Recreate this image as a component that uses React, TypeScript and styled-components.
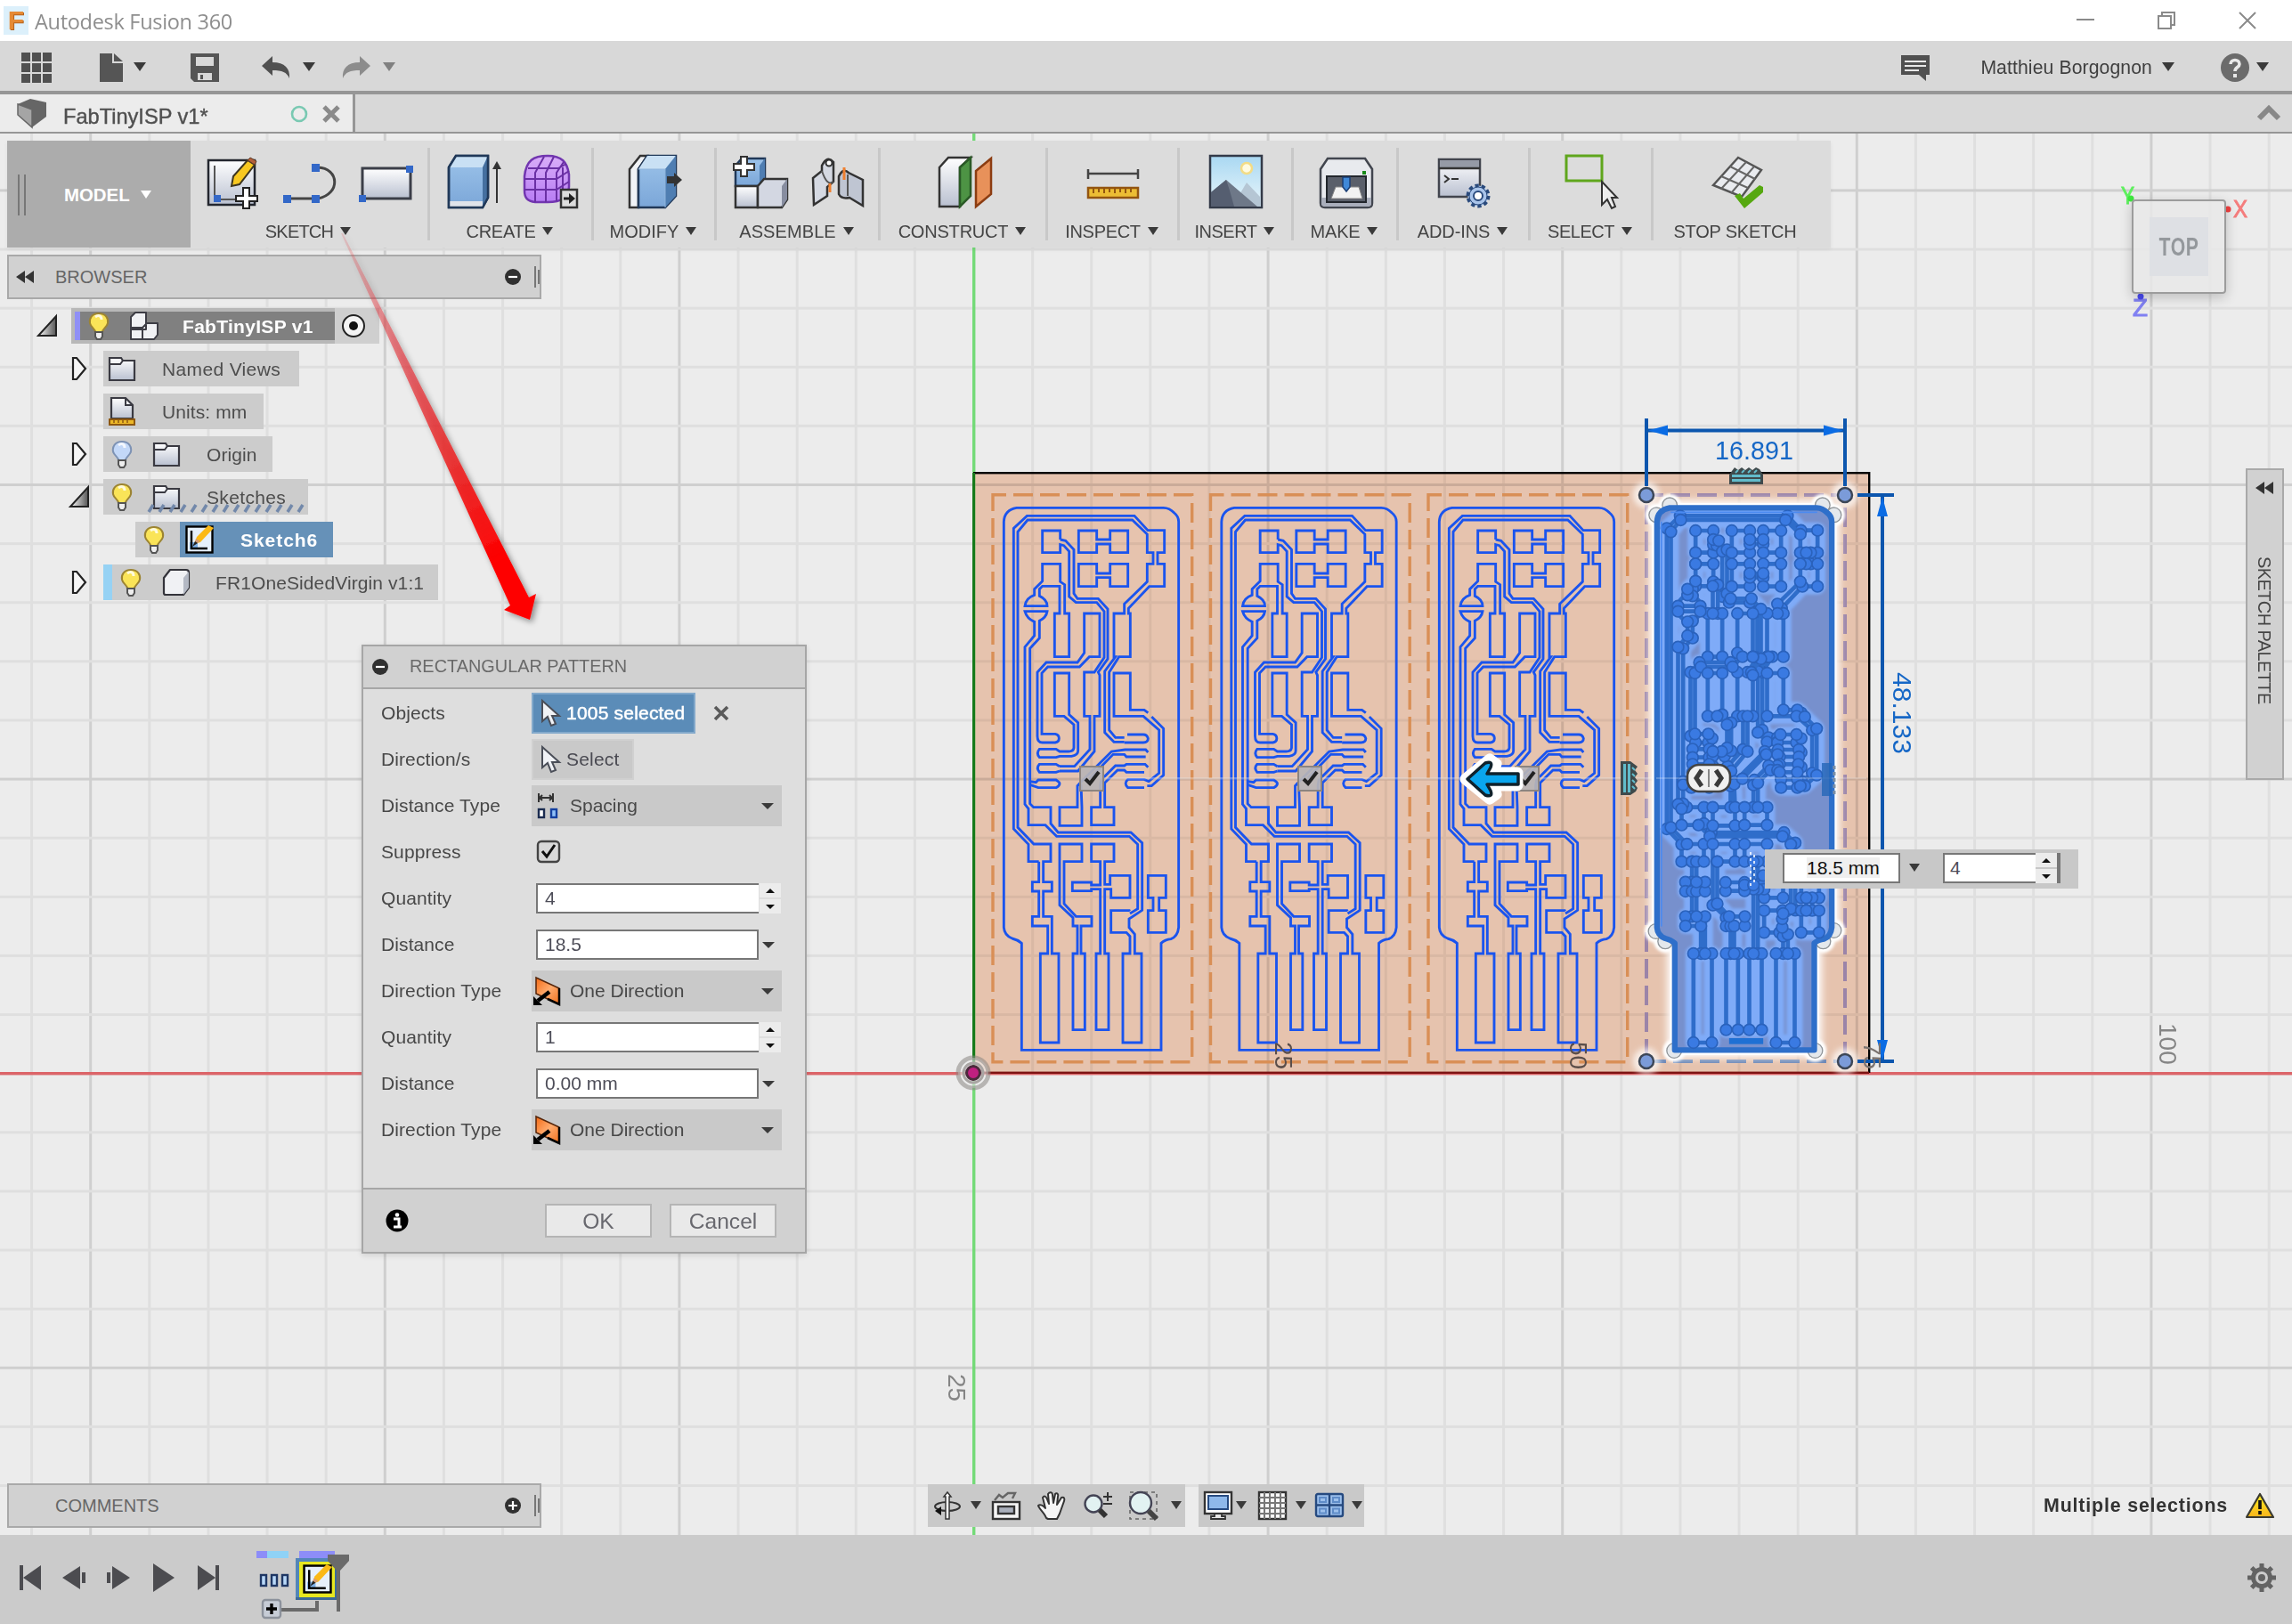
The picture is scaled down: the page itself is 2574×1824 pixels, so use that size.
import React from 'react';
import styled, { createGlobalStyle } from 'styled-components';

const GlobalStyle = createGlobalStyle`
  body { margin: 0; background: #ececec; font-family: "Liberation Sans", Arial, sans-serif; }
  * { box-sizing: border-box; }
  svg { display: block; flex: none; overflow: visible; }
`;

/* ---------- shell ---------- */

const Shell = styled.div`
  width: 2574px;
  height: 1824px;
  display: flex;
  flex-direction: column;
  overflow: hidden;
  color: #444;
`;

const TitleBar = styled.header`
  height: 46px;
  background: #fff;
  display: flex;
  align-items: center;
  padding: 0 40px 0 4px;
`;

const Logo = styled.div`
  width: 28px;
  height: 32px;
  background: #dcf0fb;
  color: #e58a33;
  font: bold 30px/32px "Liberation Sans", sans-serif;
  text-align: center;
  text-shadow: 1px 1px 0 #b4621c;
`;

const AppName = styled.span`
  margin: 2px 0 0 7px;
  font: 23.5px "Open Sans", "Noto Sans", sans-serif;
  letter-spacing: -0.3px;
  color: #8e8e8e;
`;

const WindowButtons = styled.div`
  margin-left: auto;
  display: flex;
  gap: 71px;
`;

const QuickBar = styled.div`
  height: 60px;
  background: #d8d8d8;
  border-bottom: 4px solid #969696;
  display: flex;
  align-items: center;
  padding: 4px 26px 0 24px;
`;

const Space = styled.i<{ $w: number }>`
  width: ${p => p.$w}px;
  flex: none;
`;

const Caret = styled.i<{ $c?: string; $s?: number }>`
  border: ${p => p.$s ?? 7}px solid transparent;
  border-top: ${p => (p.$s ?? 7) + 3}px solid ${p => p.$c ?? '#3a3a3a'};
  border-bottom: 0;
  margin-bottom: 2px;
  flex: none;
`;

const FieldCaret = styled.i`
  border: 7px solid transparent;
  border-top-color: #3a3a3a;
  border-bottom: 0;
  flex: none;
`;

const Push = styled.div`
  margin-left: auto;
`;

const UserName = styled.span`
  font-size: 21.2px;
  letter-spacing: 0.1px;
  color: #3f3f3f;
`;

const TabBar = styled.div`
  height: 44px;
  background: #d8d8d8;
  border-bottom: 2px solid #969696;
  display: flex;
  align-items: center;
  padding-right: 13px;
`;

const Tab = styled.div`
  width: 399px;
  height: 42px;
  background: #ececec;
  border-right: 3px solid #969696;
  display: flex;
  align-items: center;
  padding-left: 20px;
`;

const TabName = styled.span`
  font-size: 23.6px;
  color: #505050;
  -webkit-text-stroke: 0.4px #505050;
  margin: 9px 0 0 19px;
  width: 256px;
`;

/* ---------- workspace ---------- */

const Workspace = styled.main`
  position: relative;
  height: 1574px;
  background: #ececec;
  display: flex;
  flex-direction: column;
  align-items: flex-start;
  padding: 8px 8px 8px;
`;

const CanvasLayer = styled.div`
  position: absolute;
  inset: 0;
  overflow: hidden;
`;

const Front = styled.div<{ $mt?: number }>`
  position: relative;
  margin-top: ${p => p.$mt ?? 0}px;
`;

const Ribbon = styled(Front)`
  display: flex;
  width: 2048px;
  height: 120px;
  background: #dcdcdc;
  box-shadow: 0 2px 5px rgba(0, 0, 0, 0.06);
`;

const ModelButton = styled.div`
  width: 206px;
  background: #acacac;
  display: flex;
  align-items: center;
  color: #fff;
  font: bold 20.4px "Liberation Sans", sans-serif;
  padding: 2px 0 0 12px;
  gap: 12px;
`;

const Grip = styled.i<{ $h: number; $g?: number }>`
  width: ${p => p.$g ?? 9}px;
  height: ${p => p.$h}px;
  border: solid #777;
  border-width: 0 2px;
  flex: none;
`;

const PanelGrip = styled.div`
  display: flex;
  align-items: center;
  gap: 2px;
`;

const GripBar = styled.i<{ $h: number }>`
  width: 2px;
  height: ${p => p.$h}px;
  background: #777;
`;

const ModelName = styled.span`
  margin-left: 31px;
`;

const Section = styled.section<{ $w: number; $last?: boolean }>`
  width: ${p => p.$w}px;
  height: 104px;
  margin-top: 8px;
  padding-top: 8px;
  border-right: ${p => (p.$last ? 0 : 3)}px solid #c8c8c8;
  display: flex;
  flex-direction: column;
  align-items: center;
`;

const IconRow = styled.div`
  display: flex;
  gap: 22px;
  height: 64px;
  padding-left: 4px;
`;

const SectionLabel = styled.div<{ $ls: number }>`
  margin-top: 10px;
  padding-right: 2px;
  display: flex;
  align-items: center;
  gap: 8px;
  font-size: 20px;
  line-height: 24px;
  color: #444;
  letter-spacing: ${p => p.$ls}px;
  white-space: nowrap;
`;

const PanelBar = styled(Front)`
  width: 600px;
  height: 50px;
  background: #d1d1d1;
  border: 2px solid #a9a9a9;
  display: flex;
  align-items: center;
  font-size: 20px;
  color: #666;
  padding: 0 0 0 8px;
`;

const PanelTitle = styled.span<{ $ml: number }>`
  margin-left: ${p => p.$ml}px;
  flex: 1;
`;

/* ---------- browser tree ---------- */

const Tree = styled(Front)`
  display: flex;
  flex-direction: column;
  gap: 8px;
`;

const Row = styled.div<{ $indent: number }>`
  display: flex;
  align-items: center;
  height: 40px;
  padding-left: ${p => p.$indent}px;
`;

const Expander = styled.div<{ $w: number }>`
  width: ${p => p.$w}px;
`;

const Chip = styled.div<{ $w: number; $pl: number; $bg?: string }>`
  display: flex;
  align-items: center;
  height: 40px;
  width: ${p => p.$w}px;
  padding-left: ${p => p.$pl}px;
  background: ${p => p.$bg ?? '#cccccc'};
`;

const Stripe = styled.i<{ $w: number; $c: string }>`
  width: ${p => p.$w}px;
  background: ${p => p.$c};
  align-self: stretch;
`;

const RootInner = styled.div`
  display: flex;
  align-items: center;
  width: 292px;
  height: 32px;
  background: #808080;
`;

const RootFrame = styled.div`
  display: flex;
  align-items: center;
  height: 40px;
  background: #b8b8b8;
  padding-left: 4px;
`;

const TreeText = styled.span<{ $ml: number; $strong?: boolean; $ls?: number }>`
  margin: 1px 0 0 ${p => p.$ml}px;
  font-size: 21px;
  font-weight: ${p => (p.$strong ? 700 : 400)};
  color: ${p => (p.$strong ? '#fff' : '#4d4d4d')};
  letter-spacing: ${p => p.$ls ?? 0.1}px;
  white-space: nowrap;
`;

const Squiggle = styled.div`
  position: absolute;
  left: 157px;
  top: 220px;
`;

/* ---------- dialog ---------- */

const Dialog = styled.div`
  position: absolute;
  left: 406px;
  top: 574px;
  width: 500px;
  height: 684px;
  border: 2px solid #a6a6a6;
  background: #dedede;
  display: flex;
  flex-direction: column;
  box-shadow: 0 2px 6px rgba(0, 0, 0, 0.12);
`;

const DialogHead = styled.div`
  height: 48px;
  background: #d1d1d1;
  border-bottom: 2px solid #a6a6a6;
  display: flex;
  align-items: center;
  gap: 23px;
  padding: 0 0 1px 9px;
  font-size: 19.9px;
  color: #6a6a6a;
`;

const Fields = styled.div`
  flex: 1;
  padding-top: 1px;
`;

const Field = styled.label`
  display: flex;
  align-items: center;
  height: 52px;
  padding-left: 20px;
  font-size: 21px;
  color: #484848;
`;

const FieldName = styled.span`
  width: 169px;
  letter-spacing: 0.1px;
  white-space: nowrap;
`;

const PickButton = styled.div<{ $w: number; $on?: boolean }>`
  width: ${p => p.$w}px;
  height: 46px;
  background: ${p => (p.$on ? '#5b8cb8' : '#c9c9c9')};
  border: 2px solid ${p => (p.$on ? '#83a9cb' : '#d0d0d0')};
  color: ${p => (p.$on ? '#fff' : '#4a4a52')};
  display: flex;
  align-items: center;
  gap: 7px;
  padding-left: 8px;
  letter-spacing: 0.2px;
  -webkit-text-stroke: ${p => (p.$on ? 0.5 : 0)}px #fff;
  white-space: nowrap;
`;

const Dropdown = styled.div`
  width: 281px;
  height: 46px;
  background: #c9c9c9;
  display: flex;
  align-items: center;
  padding: 0 9px 0 3px;
`;

const DropText = styled.span`
  flex: 1;
  margin-left: 10px;
`;

const Entry = styled.div<{ $w: number; $open?: boolean }>`
  width: ${p => p.$w}px;
  height: 34px;
  background: #fff;
  border: 2px solid #777;
  border-right-width: ${p => (p.$open ? 0 : 2)}px;
  font-size: 21px;
  line-height: 29px;
  color: #4d4d58;
`;

const EntryText = styled.span<{ $ml: number; $hl?: boolean }>`
  margin-left: ${p => p.$ml}px;
  color: ${p => (p.$hl ? '#111' : 'inherit')};
  background: ${p => (p.$hl ? '#efefef' : 'none')};
`;

const Spinner = styled.div`
  width: 24px;
  height: 34px;
  display: grid;
  grid-template-rows: 1fr 1fr;
  gap: 2px;
`;

const SpinHalf = styled.i`
  background: #ececec;
  display: flex;
  align-items: center;
  justify-content: center;
`;

const SpinTri = styled.i<{ $up?: boolean }>`
  border: 5px solid transparent;
  border-top: ${p => (p.$up ? '0' : '5px solid #111')};
  border-bottom: ${p => (p.$up ? '5px solid #111' : '0')};
`;

const DialogFoot = styled.div`
  height: 72px;
  background: #d1d1d1;
  border-top: 2px solid #a6a6a6;
  display: flex;
  align-items: center;
  padding-left: 25px;
`;

const FootButton = styled.div<{ $ml: number }>`
  margin-left: ${p => p.$ml}px;
  width: 120px;
  height: 38px;
  background: #e9e9e9;
  border: 2px solid #b5b5b5;
  font-size: 24.6px;
  line-height: 35px;
  text-align: center;
  color: #68686e;
`;

/* ---------- floating pieces ---------- */

const InlineEditor = styled.div`
  position: absolute;
  left: 1982px;
  top: 804px;
  width: 352px;
  height: 44px;
  background: #c8c8c8;
  display: flex;
  align-items: center;
  padding: 0 0 2px 20px;
`;

const Palette = styled.div`
  position: absolute;
  left: 2522px;
  top: 376px;
  width: 43px;
  height: 350px;
  background: #d1d1d1;
  border: 2px solid #a9a9a9;
  display: flex;
  flex-direction: column;
  align-items: center;
  padding-top: 13px;
`;

const PaletteText = styled.span`
  writing-mode: vertical-rl;
  font-size: 20px;
  letter-spacing: -0.6px;
  color: #444;
  margin: 70px 2px 0 0;
`;

const ViewCube = styled.div`
  position: absolute;
  left: 2394px;
  top: 74px;
  width: 106px;
  height: 106px;
  border: 2px solid #9c9c9c;
  border-radius: 4px;
  background: rgba(232, 232, 232, 0.8);
  box-shadow: 0 4px 14px rgba(0, 0, 0, 0.2);
  display: flex;
  align-items: center;
  justify-content: center;
`;

const CubeFace = styled.div`
  width: 66px;
  height: 66px;
  background: #dee0e4;
  color: #94989c;
  font: bold 29px/66px "Liberation Sans", sans-serif;
  display: flex;
  justify-content: center;
  letter-spacing: 1px;
`;

const Narrow = styled.span`
  transform: scaleX(0.73);
`;

const BottomRow = styled(Front)`
  margin-top: auto;
  width: 100%;
  display: flex;
  align-items: center;
`;

const NavGroup = styled.div<{ $w: number; $ml: number; $cols: string }>`
  width: ${p => p.$w}px;
  height: 48px;
  margin-left: ${p => p.$ml}px;
  background: #c9c9c9;
  display: grid;
  grid-template-columns: ${p => p.$cols};
  align-items: center;
  justify-items: center;
`;

const Status = styled.span`
  margin: 0 20px 0 auto;
  font: bold 21.4px "Liberation Sans", sans-serif;
  letter-spacing: 0.82px;
  color: #333;
`;

const Timeline = styled.footer`
  height: 100px;
  background: #cbcbcb;
  display: flex;
  align-items: center;
  padding: 0 18px 4px 20px;
`;

/* ---------- canvas drawing ---------- */

const OUTLINE =
  'M185 181 H680 Q700 181 716 198 Q731 210 731 228 V1595 Q728 1625 705 1634 Q685 1636 672 1648 V2008 H202 V1648 Q188 1636 170 1632 Q144 1622 142 1595 V228 Q144 188 185 181 Z';

const TRACES = [
  'M260 1373 H225 V1315 L175 1263 V250 L220 208 H582 L627 257 H683 V332 H660 V370 H683 V446 H632 L562 520 V537 H568 V683 H530 L497 735 V930 L518 955 H548',
  'M260 1373 V1442 H238 V1473 H260 V1558 H238 V1590 H290 V1683 H265 V1983 H327 V1683 H304 V1558 H275 V1473 H304 V1442 H275 V1373 H300 V1314 H243 L189 1258 V262 L222 222 H575 L625 270 V332 H645 V370 H625 V430 L548 505 V537 H513 V683 H518 L482 732 V938 L513 970 H548',
  'M548 972 H612 Q628 972 628 958 Q624 945 612 945 H558',
  'M332 288 V258 H272 V332 H332 V305 L344 308 L362 328 V480 L385 500 H455 L480 530 V686 L447 735 H413 V883 H432 V995 L380 1052 H330',
  'M332 288 L350 292 L378 322 V470 L390 487 H460 L492 522 V690 L460 735 L465 745 V883 H447 V1002 L392 1068 H330',
  'M455 288 V258 H394 V332 H455 V303 H500 V332 H560 V258 H500 V288 Z',
  'M455 402 V370 H394 V446 H455 V416 H500 V446 H560 V370 H500 V402 Z',
  'M272 370 H332 V430 L347 440 V537 H362 V683 H313 V537 H330 V445 H272 L262 455 V478 Q288 490 288 512 H213 Q216 485 245 475 V455 L272 428 Z',
  'M567 1540 L565 1538 H503 V1612 H555 L567 1625 V1683 H543 V1983 H606 V1683 H583 V1618 L564 1595 V1566 L608 1537 V1310 L570 1275 H325 L300 1245 V1190 H242 L230 1178 V655 L262 620 V562 Q285 550 288 530 H213 Q220 555 245 565 V612 L213 650 V1180 L225 1195 V1250 H282 L320 1288 H565 L593 1315 V1532 L567 1548',
  'M230 1103 L250 1106 L258 1098 H318 Q330 1106 330 1110 Q330 1118 318 1124 H258 L230 1114',
  'M465 683 V537 H413 V670 L390 702 H285 L255 735 V950 Q255 972 272 972 H315 Q328 970 328 958 Q328 945 315 943 H270 V738 L290 717 H397 L430 683 Z',
  'M330 1002 L318 994 H262 Q250 1008 262 1022 H318 L330 1018 H370 Q392 1015 392 1000 V905 L362 878 V738 H313 V883 H345 L378 912 V990 Q376 1002 360 1002 Z',
  'M330 1052 L318 1045 H262 Q250 1058 262 1072 H318 L330 1068',
  'M628 872 L615 862 H568 V738 H513 V883 H612 L665 930 V1075 L630 1103 L615 1096 H560 Q545 1110 560 1124 H615',
  'M640 885 L680 925 V1082 L640 1118 H625',
  'M628 1005 L620 996 H550 L505 1002 L405 1102 L390 1118 V1190 H330 V1252 H405 V1190 L402 1112',
  'M620 1020 H555 L548 1012 H510 L430 1094',
  'M628 1055 L618 1045 H555 L548 1050 H518 L470 1098 L467 1115 V1190 H437 V1250 H513 V1190 H482 V1108 L525 1065 H548 L555 1072 H615',
  'M345 1373 H405 V1314 H330 V1520 L375 1562 V1590 H390 V1683 H375 V1940 H415 V1683 H402 V1590 H438 V1558 H385 L345 1515 Z',
  'M467 1373 H437 V1314 H513 V1373 H482 V1450 H500 V1420 H567 V1495 H503 V1466 H482 V1683 H495 V1940 H453 V1683 H467 V1466 H437 V1472 H373 V1443 H437 V1452 H467 Z',
  'M645 1495 H628 V1420 H688 V1495 H665 V1538 H688 V1612 H628 V1538 H645 Z',
];

const CORNERS = [
  [185, 172], [140, 205], [700, 172], [738, 205],
  [138, 1608], [170, 1642], [738, 1605], [702, 1642],
  [200, 2010], [675, 2010],
];

const boardAt = (n: number) => `translate(${1080 + 244.5 * n} 510) scale(0.33333)`;

function Board({ n }: { n: number }) {
  return (
    <g transform={boardAt(n)} fill="none" stroke="#1a54ee" strokeWidth={8.6}>
      <path d={OUTLINE} />
      {TRACES.map(d => <path key={d} d={d} />)}
    </g>
  );
}

function SelectedBoard() {
  return (
    <g transform={boardAt(3)} fill="none" strokeLinejoin="round" strokeLinecap="round">
      <path d={OUTLINE} stroke="#fff" strokeWidth={50} filter="url(#soft)" />
      <path d={OUTLINE} stroke="#fff" strokeWidth={32} />
      <g filter="url(#soft2)">
        {CORNERS.map(([x, y]) => <circle key={`${x}${y}`} cx={x} cy={y} r={38} fill="#fff" />)}
      </g>
      {CORNERS.map(([x, y]) => (
        <circle key={`${x}${y}`} cx={x} cy={y} r={25} fill="#e4e8ec" stroke="#8f9498" strokeWidth={4} />
      ))}
      <path d={OUTLINE} fill="#7790cd" />
      <g stroke="#7fabf8" strokeWidth={54} filter="url(#soft2)">
        {TRACES.map(d => <path key={d} d={d} />)}
      </g>
      <path d={OUTLINE} stroke="#2e6fca" strokeWidth={19} />
      <g stroke="#2f6dca" strokeWidth={14} style={{ markerStart: 'url(#node)', markerMid: 'url(#node)', markerEnd: 'url(#node)' }}>
        {TRACES.map(d => <path key={d} d={d} />)}
      </g>
      <path d="M190 196 H680 M157 230 V1590" stroke="#4b8af0" strokeWidth={5} />
      <rect x={385} y={1968} width={115} height={20} fill="#1f70d4" />
    </g>
  );
}

function CheckMark({ x }: { x: number }) {
  return (
    <g transform={`translate(${x} 874)`}>
      <rect x={-13} y={-13} width={26} height={27} fill="#b9b5b6" fillOpacity={0.92} stroke="#8c8480" strokeWidth={2} />
      <path d="M-7 1 L-2 6 L8 -7" fill="none" stroke="#222" strokeWidth={4} />
    </g>
  );
}

function Hatch({ x, y, r = 0 }: { x: number; y: number; r?: number }) {
  return (
    <g transform={`translate(${x} ${y}) rotate(${r})`}>
      <path d="M-19 -1 L-13 -9 L-9 -6 L-5 -9 L-1 -6 L3 -9 L7 -6 L11 -9 L15 -7 L19 -1 V10 H-19 Z" fill="#3f4a4c" />
      <rect x={-16} y={-1} width={32} height={3} fill="#62bccb" />
      <rect x={-16} y={4} width={32} height={3} fill="#62bccb" />
      <path d="M-12 -3 l3 -3 M-5 -3 l3 -3 M2 -3 l3 -3 M9 -3 l3 -3" stroke="#62bccb" strokeWidth={2} />
    </g>
  );
}

const grid = (origin: number, from: number, to: number) => {
  const out: { k: number; p: number }[] = [];
  for (let k = -24; k < 26; k++) {
    const p = origin + k * 66.12;
    if (p > from && p < to) out.push({ k, p });
  }
  return out;
};

function Scene() {
  const lineColor = (k: number) => (k % 5 === 0 ? '#cfcfcf' : '#dfdfdf');
  return (
    <svg width={2574} height={1574} viewBox="0 150 2574 1574" fontFamily="Liberation Sans">
      <defs>
        <filter id="soft" x="-20%" y="-20%" width="140%" height="140%"><feGaussianBlur stdDeviation="12" /></filter>
        <filter id="soft2" x="-20%" y="-20%" width="140%" height="140%"><feGaussianBlur stdDeviation="5" /></filter>
        <filter id="halo" x="-50%" y="-50%" width="200%" height="200%"><feGaussianBlur stdDeviation="3" /></filter>
        <marker id="node" markerUnits="userSpaceOnUse" markerWidth={60} markerHeight={60} viewBox="-30 -30 60 60" refX={0} refY={0}>
          <circle r={19} fill="#3a7ae2" stroke="#2a62bc" strokeWidth={5} />
        </marker>
      </defs>
      {grid(1093.5, 0, 2574).map(({ k, p }) => (
        <rect key={`v${k}`} x={p - 1.5} y={150} width={3} height={1574} fill={lineColor(k)} />
      ))}
      {grid(1205.7, 150, 1724).map(({ k, p }) => (
        <rect key={`h${k}`} x={0} y={p - 1.5} width={2574} height={3} fill={lineColor(k)} />
      ))}
      <rect x={1092} y={150} width={3.4} height={1574} fill="#74da78" />
      <rect x={0} y={1204} width={2574} height={3.4} fill="#dc6468" />

      <rect x={1093} y={531} width={1006} height={674} fill="#f9d3bc" style={{ mixBlendMode: 'multiply' }} />
      <rect x={1093} y={530} width={1007} height={2.4} fill="#000" />
      <rect x={2098} y={530} width={2.4} height={675} fill="#000" />
      <rect x={1092} y={531} width={3} height={674} fill="#167a1a" />
      <rect x={1093} y={1203.6} width={1006} height={2.4} fill="#7d1212" />

      {[0, 1, 2].map(n => (
        <rect key={n} x={1115 + 244.5 * n} y={555.7} width={223.7} height={637} fill="none" stroke="#d98f56" strokeWidth={3.4} strokeDasharray="22 8" strokeDashoffset={7} />
      ))}
      <path d="M2072 1192 V556 H1849 V1192" fill="none" stroke="#9b84a8" strokeWidth={4} strokeDasharray="22 8" />
      <path d="M1849 1192 H2072" stroke="#6d88b6" strokeWidth={4} strokeDasharray="22 8" />

      {[0, 1, 2].map(n => <Board key={n} n={n} />)}
      <rect x={1226} y={873} width={680} height={2.4} fill="#fff" fillOpacity={0.3} />
      <SelectedBoard />
      <rect x={1860} y={873} width={236} height={2} fill="#fff" fillOpacity={0.22} />
      {[1226, 1471, 1715].map(x => <CheckMark key={x} x={x} />)}

      {[[1849, 556], [2072, 556], [1849, 1192], [2072, 1192]].map(([x, y]) => (
        <g key={`${x}-${y}`}>
          <circle cx={x} cy={y} r={15} fill="#fff" opacity={0.7} filter="url(#halo)" />
          <circle cx={x} cy={y} r={8} fill="#7b9bd9" stroke="#3d4757" strokeWidth={2.5} />
        </g>
      ))}

      <g stroke="#0c56ae" strokeWidth={4}>
        <path d="M1849 470 V546 M2072 470 V546 M1849 483.5 H2072 M2086 556 H2127 M2086 1192 H2127 M2114 556 V1192" />
      </g>
      <g fill="#0b6ce4">
        <path d="M1851 483.5 L1873 477.5 V489.5 Z M2070 483.5 L2048 477.5 V489.5 Z M2114 558 L2108 580 H2120 Z M2114 1191 L2108 1168 H2120 Z" />
      </g>
      <g fill="#1667c6" fontSize={30}>
        <text x={1926} y={516} textLength={88} lengthAdjust="spacingAndGlyphs">16.891</text>
        <text transform="translate(2126 755) rotate(90)" textLength={92}>48.133</text>
      </g>

      <Hatch x={1961} y={534} />
      <Hatch x={1830} y={874} r={90} />
      <rect x={2046} y={857} width={11} height={37} fill="#2467b8" opacity={0.8} />
      <path d="M2060 860 v32" stroke="#7d8fa5" strokeWidth={3} strokeDasharray="4 3" />

      <g fill="#5b4e4a" fontSize={28}>
        <text transform="translate(1432 1170) rotate(90)">25</text>
        <text transform="translate(1763 1170) rotate(90)">50</text>
      </g>
      <g fontSize={28}>
        <text transform="translate(2093 1170) rotate(90)" fill="#7b7370">75</text>
        <text transform="translate(2425 1149) rotate(90)" fill="#858585">100</text>
        <text transform="translate(1065 1543) rotate(90)" fill="#858585">25</text>
      </g>

      <g>
        <path d="M1646 875 L1673 853 L1680 858 L1676 868 H1704 V882 H1676 L1680 892 L1673 897 Z" fill="#fff" stroke="#fff" strokeWidth={13} strokeLinejoin="round" />
        <path d="M1648 875 L1668 857 Q1677 854 1674 862 L1670 869 H1705 V881 H1670 L1674 888 Q1677 896 1668 893 Z" fill="#0aa6ee" stroke="#10222c" strokeWidth={3.5} strokeLinejoin="round" />
      </g>
      <g transform="translate(1919 874)">
        <rect x={-24} y={-15} width={48} height={30} rx={13} fill="#f0f0f0" stroke="#444" strokeWidth={2.6} />
        <path d="M-8 -9 L-14 0 L-8 9 M8 -9 L14 0 L8 9" fill="none" stroke="#3a3a3a" strokeWidth={5} />
        <path d="M0 -10 V10" stroke="#888" strokeWidth={2} />
      </g>

      <g>
        <circle cx={1093} cy={1205} r={17} fill="#ececec" fillOpacity={0.6} stroke="#8b8684" strokeOpacity={0.55} strokeWidth={5} />
        <circle cx={1093} cy={1205} r={11} fill="none" stroke="#a9a5a3" strokeWidth={3} />
        <circle cx={1093} cy={1205} r={7.5} fill="#bf1f80" stroke="#4b2a3c" strokeWidth={3} />
      </g>
      <path d="M1966 957 V995 M1970 960 V995" stroke="#fff" strokeOpacity={0.8} strokeWidth={2} strokeDasharray="3 4" />

      <g fontSize={28} strokeWidth={1}>
        <text x={2382} y={229} fill="#5ff05f" stroke="#5ff05f" textLength={15} lengthAdjust="spacingAndGlyphs">Y</text>
        <text x={2508} y={244} fill="#f47c7c" stroke="#f47c7c" textLength={16} lengthAdjust="spacingAndGlyphs">X</text>
        <text x={2395} y={355} fill="#8080f2" stroke="#8080f2" textLength={17} lengthAdjust="spacingAndGlyphs">Z</text>
      </g>
      <circle cx={2502} cy={235} r={3.5} fill="#f04040" />
      <circle cx={2393} cy={223} r={3.5} fill="#3fe83f" />
      <circle cx={2404} cy={333} r={3.5} fill="#4a4af0" />
    </svg>
  );
}

const PointerLayer = styled.div`
  position: absolute;
  inset: 0;
  pointer-events: none;
`;

function RedArrow() {
  return (
    <svg width={700} height={600} viewBox="0 150 700 600">
      <defs>
        <linearGradient id="fade" gradientUnits="userSpaceOnUse" x1={383} y1={262} x2={594} y2={696}>
          <stop offset="0" stopColor="#e03038" stopOpacity={0.15} />
          <stop offset="0.3" stopColor="#e23038" stopOpacity={0.6} />
          <stop offset="0.6" stopColor="#ec2222" stopOpacity={0.88} />
          <stop offset="0.85" stopColor="#fe0000" />
        </linearGradient>
        <filter id="drop"><feDropShadow dx="3" dy="3" stdDeviation="3" floodOpacity="0.4" /></filter>
      </defs>
      <path d="M383 262 L573 680 L566 685 L595 696 L602 667 L594 671 L385 262 Z" fill="url(#fade)" filter="url(#drop)" />
    </svg>
  );
}

/* ---------- icons ---------- */

const Defs = () => (
  <svg width={0} height={0} style={{ position: 'absolute' }}>
    <defs>
      <linearGradient id="page" x1="0" y1="0" x2="0" y2="1"><stop offset="0" stopColor="#fff" /><stop offset="1" stopColor="#b9c0d0" /></linearGradient>
      <linearGradient id="blue" x1="0" y1="0" x2="0" y2="1"><stop offset="0" stopColor="#9cc3ea" /><stop offset="1" stopColor="#7ba6d8" /></linearGradient>
      <linearGradient id="purple" x1="0" y1="0" x2="0" y2="1"><stop offset="0" stopColor="#d9aef8" /><stop offset="1" stopColor="#b77cf4" /></linearGradient>
      <linearGradient id="sky" x1="0" y1="0" x2="0" y2="1"><stop offset="0" stopColor="#a9d8f2" /><stop offset="1" stopColor="#eaf6fb" /></linearGradient>
      <linearGradient id="tri" x1="0" y1="0" x2="1" y2="0"><stop offset="0" stopColor="#fff" /><stop offset="1" stopColor="#555" /></linearGradient>
      <linearGradient id="warn" x1="0" y1="0" x2="0" y2="1"><stop offset="0" stopColor="#ffee20" /><stop offset="1" stopColor="#f8b41c" /></linearGradient>
      <linearGradient id="orange" x1="0" y1="0" x2="1" y2="1"><stop offset="0" stopColor="#f46a14" /><stop offset="0.5" stopColor="#ffab6e" /><stop offset="1" stopColor="#f0701c" /></linearGradient>
    </defs>
  </svg>
);

const Ico = ({ children, s = 64, h }: { children: React.ReactNode; s?: number; h?: number }) => (
  <svg width={s} height={h ?? s} viewBox={`0 0 ${s} ${h ?? s}`} fill="none">{children}</svg>
);

const NewSketch = () => (
  <Ico>
    <rect x={3} y={6} width={52} height={50} fill="url(#page)" stroke="#23262e" strokeWidth={2.5} />
    <path d="M10 12 V50 H42" stroke="#555" strokeWidth={2} />
    <rect x={9} y={45} width={8} height={8} fill="#3468c8" />
    <path d="M31 24 L47 6 L55 11 L38 33 L29 35 Z" fill="#f8c820" stroke="#3d3520" strokeWidth={2} />
    <path d="M47 6 L55 11 L57 7 L50 3 Z" fill="#b4603a" stroke="#5b3a28" />
    <path d="M42 37 H49 V46 H58 V52 H49 V60 H42 V52 H34 V46 H42 Z" fill="#fff" stroke="#222" strokeWidth={2} />
  </Ico>
);
const LineIcon = () => (
  <Ico>
    <path d="M5 49 H40 C66 44 64 15 40 14" stroke="#454545" strokeWidth={3} />
    <path d="M1 45 h9 v9 h-9 Z M33 45 h9 v9 h-9 Z M33 10 h9 v9 h-9 Z" fill="#3368c8" />
  </Ico>
);
const RectIcon = () => (
  <Ico>
    <rect x={4} y={15} width={54} height={34} fill="url(#page)" stroke="#3b3e48" strokeWidth={3} />
    <path d="M0 45 h8 v8 h-8 Z M53 12 h8 v8 h-8 Z" fill="#3368c8" />
  </Ico>
);
const Extrude = () => (
  <Ico>
    <path d="M3 14 L11 1 H47 V48 L41 59 H3 Z" fill="url(#blue)" stroke="#203858" strokeWidth={2.5} />
    <path d="M3 14 L11 1 H47 L41 14 Z" fill="#c9e0f4" /><path d="M41 14 L47 1 V48 L41 59 Z" fill="#456f9f" />
    <path d="M3 52 H41 V59 H3 Z" fill="#dfe3ea" />
    <path d="M3 14 L11 1 H47 V48 L41 59 H3 Z" stroke="#203858" strokeWidth={2.5} />
    <path d="M57 54 V10" stroke="#333" strokeWidth={2} /><path d="M57 7 L62 16 H52 Z" fill="#333" />
  </Ico>
);
const Form = () => (
  <Ico>
    <path d="M2 24 C4 6 12 1 28 1 C44 1 50 8 52 22 V36 C51 48 44 53 28 53 H14 C5 52 2 48 2 40 Z" fill="url(#purple)" stroke="#7236b0" strokeWidth={2.5} />
    <path d="M2 27 H38 L52 18 M2 39 H38 L52 30 M14 53 V20 L24 2 M26 53 V20 L35 2 M38 52 V20 L46 8 M6 15 H40 L49 10 M45 50 V14" stroke="#6a30a4" strokeWidth={2} />
    <rect x={43} y={39} width={18} height={20} fill="#ddd" stroke="#333" strokeWidth={2.5} />
    <path d="M46 49 H54" stroke="#222" strokeWidth={3} /><path d="M52 43 L59 49 L52 55 Z" fill="#222" />
  </Ico>
);
const PressPull = () => (
  <Ico>
    <path d="M2 16 L14 1 H22 L12 16 V59 H2 Z" fill="#f1f3f6" stroke="#333" strokeWidth={2.5} />
    <path d="M12 16 L22 1 H54 V46 L42 59 H12 Z" fill="url(#blue)" stroke="#203858" strokeWidth={2.5} />
    <path d="M12 16 L22 1 H54 L42 16 Z" fill="#c9e0f4" /><path d="M42 16 L54 1 V46 L42 59 Z" fill="#4f7eb2" />
    <path d="M12 16 H42 V59" stroke="#8fb4dc" />
    <path d="M44 24 H52 V20 L61 28 L52 36 V32 H44 Z" fill="#333" />
  </Ico>
);
const NewComp = () => (
  <Ico>
    <path d="M3 12 L10 4 H36 V28 L30 35 H3 Z" fill="url(#blue)" stroke="#203858" strokeWidth={2.5} />
    <path d="M30 12 L36 4 V28 L30 35 Z" fill="#4f7eb2" />
    <path d="M3 35 H28 V59 H3 Z" fill="url(#page)" stroke="#333" strokeWidth={2.5} />
    <path d="M28 35 L35 27 H61 V50 L55 59 H28 Z" fill="#d3d7e2" stroke="#333" strokeWidth={2.5} />
    <path d="M55 35 L61 27 V50 L55 59 Z" fill="#878da0" />
    <path d="M9 2 H16 V10 H24 V17 H16 V24 H9 V17 H1 V10 H9 Z" fill="#fff" stroke="#333" strokeWidth={2} />
  </Ico>
);
const Joint = () => (
  <Ico>
    <path d="M4 26 L14 18 V12 Q20 0 27 8 V30 L20 36 V46 L5 56 Z" fill="#d5d9e2" stroke="#333" strokeWidth={2.5} />
    <circle cx={22} cy={9} r={3.5} fill="#fff" stroke="#333" strokeWidth={2} />
    <path d="M14 18 Q20 36 27 30" stroke="#555" strokeWidth={2} />
    <path d="M33 24 Q38 14 44 20 L60 28 V57 L45 48 Q36 50 33 44 Z" fill="#bfc5d2" stroke="#333" strokeWidth={2.5} />
    <path d="M43 22 V46" stroke="#555" strokeWidth={2} />
    <path d="M39 14 V28 M23 32 V42" stroke="#f08030" strokeWidth={3} />
  </Ico>
);
const Plane = () => (
  <Ico>
    <path d="M3 14 L13 3 H38 L26 14 V58 H3 Z" fill="url(#page)" stroke="#333" strokeWidth={2.5} />
    <path d="M26 14 L38 3 V46 L26 58 Z" fill="#4d9344" stroke="#2a5a26" strokeWidth={2.5} />
    <path d="M44 18 L61 4 V44 L44 58 Z" fill="#e8915a" stroke="#8c3d12" strokeWidth={2.5} />
  </Ico>
);
const Measure = () => (
  <Ico>
    <path d="M2 21 H58 M2 16 V27 M58 16 V27" stroke="#444" strokeWidth={2.5} />
    <rect x={2} y={37} width={56} height={11} fill="#ecbd34" stroke="#935510" strokeWidth={2.5} />
    <path d="M8 38 v5 M14 38 v4 M20 38 v5 M26 38 v4 M32 38 v5 M38 38 v4 M44 38 v5 M50 38 v4" stroke="#935510" strokeWidth={2} />
  </Ico>
);
const Picture = () => (
  <Ico>
    <rect x={1} y={1} width={58} height={58} fill="url(#sky)" stroke="#333a48" strokeWidth={2.5} />
    <circle cx={42} cy={15} r={6} fill="#fffbe0" stroke="#f3dc86" strokeWidth={2.5} />
    <path d="M26 58 L42 31 L58 48 V58 Z" fill="#b5c6d4" />
    <path d="M2 42 L19 28 L54 58 H2 Z" fill="#6e7888" /><path d="M2 42 L19 28 L23 40 L28 58 H2 Z" fill="#555e70" />
  </Ico>
);
const Printer = () => (
  <Ico>
    <path d="M2 16 L10 4 H52 L60 16 V54 Q60 59 55 59 H7 Q2 59 2 54 Z" fill="#e8eaee" stroke="#42464f" strokeWidth={2.5} />
    <path d="M3 48 H59 V55 Q59 58 55 58 H7 Q3 58 3 55 Z" fill="#a9aebb" />
    <path d="M9 24 H53 V53 H9 Z" fill="#5a5f6a" stroke="#22262c" strokeWidth={2} />
    <path d="M19 36 H45 L49 49 H14 Z" fill="#f2f2f2" stroke="#888" />
    <path d="M27 25 H35 V36 L31 41 L27 36 Z" fill="#3f88d8" stroke="#1c3f74" strokeWidth={1.5} />
    <rect x={49} y={18} width={4} height={4} fill="#188a18" />
  </Ico>
);
const Script = () => (
  <Ico>
    <rect x={2} y={5} width={46} height={42} fill="url(#page)" stroke="#42454e" strokeWidth={2.5} />
    <rect x={3} y={6} width={44} height={9} fill="#959aa6" /><path d="M2 15 H48" stroke="#333" strokeWidth={2.5} />
    <path d="M8 23 L13 27 L8 31 M16 27 H24" stroke="#333" strokeWidth={2} />
    <circle cx={46} cy={46} r={11.5} fill="#a9c4ea" stroke="#2a4a7c" strokeWidth={4} strokeDasharray="4.2 3" />
    <circle cx={46} cy={46} r={10} fill="#a9c4ea" stroke="#2a4a7c" strokeWidth={1} />
    <circle cx={46} cy={46} r={5} fill="#fff" stroke="#2a4a7c" strokeWidth={2} />
  </Ico>
);
const SelectIcon = () => (
  <Ico>
    <rect x={2} y={1} width={40} height={28} stroke="#5fa61c" strokeWidth={3} />
    <path d="M42 30 V56 L48 50 L53 60 L57 58 L53 48 H59 Z" fill="#eee" stroke="#333" strokeWidth={2} />
  </Ico>
);
const StopSketch = () => (
  <Ico>
    <path d="M4 34 L32 3 L58 17 L36 47 Z" fill="#e9ebef" stroke="#555" strokeWidth={2.5} />
    <path d="M13 38 L41 8 M24 43 L50 13 M13 24 L43 37 M23 13 L51 27" stroke="#666" strokeWidth={2} />
    <path d="M28 46 L34 43 L38 49 L56 34 L60 36 V42 L39 60 Z" fill="#56a810" />
  </Ico>
);

const Bulb = ({ off }: { off?: boolean }) => (
  <Ico s={24} h={32}>
    <path d="M12 2 C4 2 1 8 2 13 C3 18 8 19 8 23 H16 C16 19 21 18 22 13 C23 8 20 2 12 2 Z" fill={off ? '#c3d8f8' : '#fae458'} stroke={off ? '#7d92b4' : '#9c8432'} strokeWidth={2} />
    <path d="M8 6 C12 3 15 5 15 9" stroke="#fff" strokeWidth={3} opacity={0.8} />
    <path d="M8 23 H16 V28 L14 31 H10 L8 28 Z" fill="#eee" stroke="#555" strokeWidth={2} />
  </Ico>
);
const Folder = () => (
  <Ico s={30} h={28}>
    <path d="M1 2 H14 L16 5 H29 V27 H1 Z" fill="url(#page)" stroke="#3a3a42" strokeWidth={2.2} />
    <path d="M1 9 H13 L16 5" stroke="#3a3a42" strokeWidth={2} />
  </Ico>
);
const UnitsIcon = () => (
  <Ico s={30} h={32}>
    <path d="M3 1 H19 L27 9 V24 H3 Z" fill="url(#page)" stroke="#3a3a42" strokeWidth={2.2} /><path d="M19 1 V9 H27" stroke="#3a3a42" strokeWidth={2} />
    <rect x={1} y={25} width={28} height={6} fill="#ecb828" stroke="#8e5810" strokeWidth={2} />
    <path d="M6 26v3 M11 26v3 M16 26v3 M21 26v3" stroke="#8e5810" strokeWidth={1.5} />
  </Ico>
);
const Cubes = () => (
  <Ico s={32}>
    <path d="M1 6 L6 1 H18 V20 H1 Z M1 18 H14 V31 H1 Z M14 18 L19 13 H31 V26 L27 31 H14 Z" fill="#f0f1f4" stroke="#3d3d45" strokeWidth={2} strokeLinejoin="round" />
  </Ico>
);
const Body = () => (
  <Ico s={32}>
    <path d="M2 11 L9 2 H27 Q30 2 30 5 V22 L24 30 H4 Q2 30 2 28 Z" fill="#f0f1f4" stroke="#33333a" strokeWidth={2.2} strokeLinejoin="round" />
    <path d="M24 11 L30 4 V22 L24 30 Z" fill="#b4b9c4" />
  </Ico>
);
const SketchGlyph = ({ s = 32 }: { s?: number }) => (
  <svg width={s} height={s} viewBox="0 0 32 32" fill="none">
    <rect x={1.5} y={1.5} width={29} height={29} fill="#e6f0fb" stroke="#000" strokeWidth={2.4} />
    <rect x={5} y={19} width={9} height={8} fill="#7fb2ea" />
    <path d="M7 6 V26 H25" stroke="#000" strokeWidth={2.4} />
    <path d="M10 21 L13 13 L26 0 L32 3 L17 19 Z" fill="#fbb916" />
    <path d="M10 22 L12 15 L17 18 Z" fill="#d59c74" /><path d="M8 24 L11 18 L14 20 Z" fill="#222" />
  </svg>
);
const Closed = () => <Ico s={18} h={28}><path d="M2 2 H6 L16 14 L6 26 H2 Z" fill="#f6f6f6" stroke="#222" strokeWidth={2.2} /></Ico>;
const Opened = () => <Ico s={24} h={26}><path d="M22 2 V24 H2 Z" fill="url(#tri)" stroke="#222" strokeWidth={2} /></Ico>;
const Rewind = () => <Ico s={22} h={14}><path d="M10 0 V14 L0 7 Z M20 0 V14 L10 7 Z" fill="#333" /></Ico>;
const Round = ({ plus }: { plus?: boolean }) => (
  <Ico s={20}><circle cx={10} cy={10} r={9} fill="#303030" /><path d={plus ? 'M5 10 H15 M10 5 V15' : 'M5 10 H15'} stroke="#fff" strokeWidth={2.2} /></Ico>
);
const Cursor = () => (
  <Ico s={22} h={34}><path d="M2 3 V26 L8 21 L12 31 L17 29 L13 20 H21 Z" fill="#f0f2f6" stroke="#4a4e58" strokeWidth={2} /></Ico>
);
const SpacingIcon = () => (
  <Ico s={30} h={34}>
    <path d="M5 3 V13 M21 3 V13 M6 8 H20 M9 5 L6 8 L9 11 M17 5 L20 8 L17 11" stroke="#333" strokeWidth={2} />
    <rect x={5} y={21} width={6} height={9} fill="#fff" stroke="#1b2c50" strokeWidth={2.4} />
    <rect x={19} y={21} width={6} height={9} fill="#8fc0f8" stroke="#1440a0" strokeWidth={2.4} />
  </Ico>
);
const DirIcon = () => (
  <Ico s={30} h={36}>
    <path d="M2 3 L28 15 V33 L2 21 Z" fill="url(#orange)" stroke="#55250a" strokeWidth={1.5} />
    <path d="M28 15 V33 L15 27" stroke="#000" strokeWidth={2.5} />
    <path d="M17 19 L4 29" stroke="#000" strokeWidth={4.5} /><path d="M-1 34 V24 L9 34 Z" fill="#000" />
  </Ico>
);
const CheckBox = () => (
  <Ico s={28}>
    <rect x={2} y={2} width={24} height={23} rx={4} fill="#d8d8d8" stroke="#444" strokeWidth={2.4} />
    <path d="M7 13 L12 19 L21 6" stroke="#111" strokeWidth={3} />
  </Ico>
);

/* ---------- composition ---------- */

const sections: { w: number; label: string; ls: number; icons: React.FC[]; caret?: boolean }[] = [
  { w: 269, label: 'SKETCH', ls: -0.8, icons: [NewSketch, LineIcon, RectIcon], caret: true },
  { w: 184, label: 'CREATE', ls: -0.3, icons: [Extrude, Form], caret: true },
  { w: 138, label: 'MODIFY', ls: 0, icons: [PressPull], caret: true },
  { w: 184, label: 'ASSEMBLE', ls: 0.1, icons: [NewComp, Joint], caret: true },
  { w: 188, label: 'CONSTRUCT', ls: -0.2, icons: [Plane], caret: true },
  { w: 148, label: 'INSPECT', ls: -0.3, icons: [Measure], caret: true },
  { w: 128, label: 'INSERT', ls: -0.5, icons: [Picture], caret: true },
  { w: 118, label: 'MAKE', ls: -0.2, icons: [Printer], caret: true },
  { w: 148, label: 'ADD-INS', ls: -0.1, icons: [Script], caret: true },
  { w: 138, label: 'SELECT', ls: -0.5, icons: [SelectIcon], caret: true },
  { w: 185, label: 'STOP SKETCH', ls: -0.2, icons: [StopSketch] },
];

const Steps = () => (
  <Spinner>
    <SpinHalf><SpinTri $up /></SpinHalf>
    <SpinHalf><SpinTri /></SpinHalf>
  </Spinner>
);

const PanelEdge = () => (
  <PanelGrip><GripBar $h={24} /><GripBar $h={16} /></PanelGrip>
);

const QuantityField = ({ value }: { value: string }) => (
  <Field><FieldName>Quantity</FieldName><Space $w={5} /><Entry $w={250} $open><EntryText $ml={8}>{value}</EntryText></Entry><Space $w={1} /><Steps /></Field>
);
const DistanceField = ({ value }: { value: string }) => (
  <Field><FieldName>Distance</FieldName><Space $w={5} /><Entry $w={250}><EntryText $ml={8}>{value}</EntryText></Entry><Space $w={4} /><FieldCaret /></Field>
);
const DirectionField = () => (
  <Field><FieldName>Direction Type</FieldName><Dropdown><DirIcon /><DropText>One Direction</DropText><FieldCaret /></Dropdown></Field>
);

function RectangularPattern() {
  return (
    <Dialog>
      <DialogHead><Round />RECTANGULAR PATTERN</DialogHead>
      <Fields>
        <Field>
          <FieldName>Objects</FieldName>
          <PickButton $w={184} $on><Cursor />1005 selected</PickButton>
          <Space $w={19} />
          <Ico s={20}><path d="M3 3 L17 17 M17 3 L3 17" stroke="#5a5a5a" strokeWidth={3.6} /></Ico>
        </Field>
        <Field><FieldName>Direction/s</FieldName><PickButton $w={115}><Cursor />Select</PickButton></Field>
        <Field><FieldName>Distance Type</FieldName><Dropdown><SpacingIcon /><DropText>Spacing</DropText><FieldCaret /></Dropdown></Field>
        <Field><FieldName>Suppress</FieldName><Space $w={5} /><CheckBox /></Field>
        <QuantityField value="4" />
        <DistanceField value="18.5" />
        <DirectionField />
        <QuantityField value="1" />
        <DistanceField value="0.00 mm" />
        <DirectionField />
      </Fields>
      <DialogFoot>
        <Ico s={26}><circle cx={13} cy={13} r={12.5} fill="#000" /><path d="M9 11 H15 V19 M9 20 H18" stroke="#fff" strokeWidth={3} /><circle cx={13} cy={6.5} r={2.3} fill="#fff" /></Ico>
        <FootButton $ml={153}>OK</FootButton>
        <FootButton $ml={20}>Cancel</FootButton>
      </DialogFoot>
    </Dialog>
  );
}

function BrowserTree() {
  return (
    <Tree $mt={10}>
      <Row $indent={33}>
        <Expander $w={39}><Opened /></Expander>
        <RootFrame>
          <RootInner>
            <Stripe $w={6} $c="#8f8ff6" /><Space $w={9} /><Bulb /><Space $w={23} /><Cubes />
            <TreeText $ml={27} $strong $ls={0.3}>FabTinyISP v1</TreeText>
          </RootInner>
        </RootFrame>
        <Chip $w={50} $pl={8} $bg="#cfcfcf">
          <Ico s={26}><circle cx={13} cy={13} r={12} fill="#f4f4f4" stroke="#222" strokeWidth={2} /><circle cx={13} cy={13} r={5} fill="#111" /></Ico>
        </Chip>
      </Row>
      <Row $indent={72}>
        <Expander $w={36}><Closed /></Expander>
        <Chip $w={220} $pl={6}><Folder /><TreeText $ml={30} $ls={0.35}>Named Views</TreeText></Chip>
      </Row>
      <Row $indent={108}>
        <Chip $w={180} $pl={6}><UnitsIcon /><TreeText $ml={30}>Units: mm</TreeText></Chip>
      </Row>
      <Row $indent={72}>
        <Expander $w={36}><Closed /></Expander>
        <Chip $w={190} $pl={9}><Bulb off /><Space $w={23} /><Folder /><TreeText $ml={30}>Origin</TreeText></Chip>
      </Row>
      <Row $indent={69}>
        <Expander $w={39}><Opened /></Expander>
        <Chip $w={230} $pl={9}><Bulb /><Space $w={23} /><Folder /><TreeText $ml={30} $ls={0.35}>Sketches</TreeText></Chip>
      </Row>
      <Row $indent={144}>
        <Chip $w={50} $pl={9}><Bulb /></Chip>
        <Chip $w={172} $pl={6} $bg="#6691b8"><SketchGlyph /><TreeText $ml={30} $strong $ls={0.95}>Sketch6</TreeText></Chip>
      </Row>
      <Row $indent={72}>
        <Expander $w={36}><Closed /></Expander>
        <Chip $w={376} $pl={0}><Stripe $w={10} $c="#96d2f4" /><Space $w={9} /><Bulb /><Space $w={23} /><Body /><TreeText $ml={28}>FR1OneSidedVirgin v1:1</TreeText></Chip>
      </Row>
      <Squiggle>
        <Ico s={178} h={10}>
          {Array.from({ length: 15 }, (_, i) => <path key={i} d={`M${2 + i * 12} 9 L${7 + i * 12} 1`} stroke="#7288aa" strokeWidth={3.5} />)}
        </Ico>
      </Squiggle>
    </Tree>
  );
}

export default function App() {
  return (
    <Shell>
      <GlobalStyle />
      <Defs />
      <TitleBar>
        <Logo>F</Logo>
        <AppName>Autodesk Fusion 360</AppName>
        <WindowButtons>
          <Ico s={20}><path d="M0 9 H20" stroke="#8a8a8a" strokeWidth={2} /></Ico>
          <Ico s={20}><path d="M1 5 H15 V19 H1 Z M5 5 V1 H19 V15 H15" stroke="#8a8a8a" strokeWidth={2} /></Ico>
          <Ico s={20}><path d="M1 1 L19 19 M19 1 L1 19" stroke="#8a8a8a" strokeWidth={2} /></Ico>
        </WindowButtons>
      </TitleBar>

      <QuickBar>
        <Ico s={34}>{[0, 12, 24].map(x => [0, 12, 24].map(y => <rect key={`${x},${y}`} x={x} y={y} width={10} height={10} fill="#505050" />))}</Ico>
        <Space $w={54} />
        <Ico s={26} h={32}><path d="M0 0 H14 V11 H26 V32 H0 Z M16 0 L26 9 H16 Z" fill="#555" /></Ico>
        <Space $w={12} /><Caret />
        <Space $w={50} />
        <Ico s={32}><path fillRule="evenodd" d="M0 0 H32 V32 H4 L0 28 Z M6 4 V14 H26 V4 Z M8 22 V30 H24 V22 Z" fill="#555" /><rect x={11} y={24} width={3} height={5} fill="#555" /></Ico>
        <Space $w={48} />
        <Ico s={32} h={26}><path d="M0 11 L12 0 V7 C26 7 32 14 31 25 C28 18 23 16 12 16 V22 Z" fill="#505050" /></Ico>
        <Space $w={14} /><Caret />
        <Space $w={30} />
        <Ico s={32} h={26}><path d="M32 11 L20 0 V7 C6 7 0 14 1 25 C4 18 9 16 20 16 V22 Z" fill="#8c8c8c" /></Ico>
        <Space $w={14} /><Caret $c="#808080" />
        <Push />
        <Ico s={32}><path d="M0 2 H32 V24 H28 V31 L20 24 H0 Z" fill="#505050" /><path d="M4 9 H28 M4 14 H28 M4 19 H20" stroke="#e8e8e8" strokeWidth={2} /></Ico>
        <Space $w={57} />
        <UserName>Matthieu Borgognon</UserName>
        <Space $w={11} /><Caret />
        <Space $w={52} />
        <Ico s={32}><circle cx={16} cy={16} r={16} fill="#6b6b6b" /><path d="M11 12 C11 6 21 6 21 12 C21 16 16 15 16 20" stroke="#e8e8e8" strokeWidth={3.6} /><rect x={14} y={23} width={4} height={4} fill="#e8e8e8" /></Ico>
        <Space $w={8} /><Caret />
      </QuickBar>

      <TabBar>
        <Tab>
          <Ico s={32}><path d="M0 6 L14 0 L32 4 V20 L16 32 L0 18 Z" fill="#666" /><path d="M0 6 L16 12 V32 L0 18 Z" fill="#a5a5a5" /><path d="M0 6 L16 12 V32 L0 18 Z" stroke="#666" strokeWidth={1.5} /></Ico>
          <TabName>FabTinyISP v1*</TabName>
          <Ico s={20}><circle cx={9} cy={11} r={8} stroke="#79c9b2" strokeWidth={2.6} /></Ico>
          <Space $w={15} />
          <Ico s={20}><path d="M2 3 L18 19 M18 3 L2 19" stroke="#8a8a8a" strokeWidth={5} /></Ico>
        </Tab>
        <Push />
        <Ico s={26} h={18}><path d="M2 15 L13 4 L24 15" stroke="#888" strokeWidth={6} /></Ico>
      </TabBar>

      <Workspace>
        <CanvasLayer><Scene /></CanvasLayer>

        <Ribbon>
          <ModelButton><Grip $h={46} /><ModelName>MODEL</ModelName><Caret $c="#fff" $s={6} /></ModelButton>
          {sections.map((s, i) => (
            <Section key={s.label} $w={s.w} $last={i === sections.length - 1}>
              <IconRow>{s.icons.map((I, j) => <I key={j} />)}</IconRow>
              <SectionLabel $ls={s.ls}>{s.label}{s.caret && <Caret $s={6} />}</SectionLabel>
            </Section>
          ))}
        </Ribbon>

        <PanelBar $mt={8}><Rewind /><PanelTitle $ml={22}>BROWSER</PanelTitle><Round /><Space $w={14} /><PanelEdge /></PanelBar>
        <BrowserTree />

        <BottomRow>
          <PanelBar><PanelTitle $ml={44}>COMMENTS</PanelTitle><Round plus /><Space $w={14} /><PanelEdge /></PanelBar>
          <NavGroup $w={289} $ml={434} $cols="44px 20px 48px 54px 50px 52px 21px">
            <Ico s={32}><ellipse cx={16} cy={17} rx={14} ry={5} stroke="#333" strokeWidth={2} /><path d="M16 1 L20 6 H18 V31 H14 V6 H12 Z" fill="#fff" stroke="#333" strokeWidth={1.5} /><path d="M2 22 L9 17 V27 Z" fill="#111" /></Ico>
            <Caret $s={6} />
            <Ico s={32}><rect x={1} y={12} width={30} height={19} fill="#f4f4f4" stroke="#333" strokeWidth={2.4} /><rect x={7} y={17} width={18} height={8} fill="#aab0bc" stroke="#333" strokeWidth={2.4} /><path d="M3 10 L8 4 L12 7 L18 2 L26 2 L23 8" stroke="#666" strokeWidth={2.4} /></Ico>
            <Ico s={32}><path d="M10 30 C8 24 2 20 1 16 C3 14 7 16 9 19 L6 7 C8 4 10 6 11 9 L13 14 L12 3 C14 0 17 1 17 4 L18 13 L20 3 C22 1 24 3 23 6 L22 15 L27 7 C30 6 31 8 30 11 L25 25 L22 31 H12 Z" fill="#f6f6f6" stroke="#333" strokeWidth={2} strokeLinejoin="round" /></Ico>
            <Ico s={32}><circle cx={11} cy={14} r={9.5} fill="#e2f2f2" stroke="#445" strokeWidth={2.4} /><path d="M18 21 L25 28" stroke="#333" strokeWidth={6} /><path d="M22 6 H32 M27 1 V11 M22 14 H32" stroke="#333" strokeWidth={2} /></Ico>
            <Ico s={32}><rect x={1} y={1} width={30} height={30} stroke="#666" strokeWidth={1.6} strokeDasharray="4 4" /><circle cx={13} cy={13} r={12} fill="#e2f2f2" stroke="#445" strokeWidth={2.4} /><path d="M22 22 L31 31" stroke="#444" strokeWidth={6} /></Ico>
            <Caret $s={6} />
          </NavGroup>
          <NavGroup $w={186} $ml={15} $cols="44px 8px 62px 0px 2px 62px 0px">
            <Ico s={32}><rect x={1} y={1} width={30} height={24} fill="#fff" stroke="#333" strokeWidth={2.4} /><rect x={5} y={5} width={22} height={15} fill="#8eb8ea" stroke="#264a80" strokeWidth={2} /><path d="M12 25 H20 V28 H24 V31 H8 V28 H12 Z" fill="#e6e6e6" stroke="#333" strokeWidth={1.8} /></Ico>
            <Caret $s={6} />
            <Ico s={32}><rect x={1} y={1} width={30} height={30} fill="#f8f8f8" stroke="#333" strokeWidth={2.4} /><path d="M7 1 V31 M13 1 V31 M19 1 V31 M25 1 V31 M1 7 H31 M1 13 H31 M1 19 H31 M1 25 H31" stroke="#777" strokeWidth={2} /></Ico>
            <i />
            <Caret $s={6} />
            <Ico s={32} h={28}><rect x={1} y={1} width={30} height={25} rx={2} fill="#9dc0ec" stroke="#264a80" strokeWidth={2.4} /><path d="M16 1 V26 M1 13.5 H31" stroke="#264a80" strokeWidth={2.4} /><path d="M5 5 h7 v5 h-7 Z M20 5 h7 v5 h-7 Z M5 17.500 h7 v5 h-7 Z M20 17.500 h7 v5 h-7 Z" stroke="#5f8cc8" strokeWidth={2} /></Ico>
            <Caret $s={6} />
          </NavGroup>
          <Status>Multiple selections</Status>
          <Ico s={32} h={30}><path d="M16 2 L31 28 H1 Z" fill="url(#warn)" stroke="#3a3a30" strokeWidth={2.2} strokeLinejoin="round" /><path d="M16 9 V19 M16 21 V25" stroke="#111" strokeWidth={3.6} /></Ico>
          <Space $w={12} />
        </BottomRow>

        <PointerLayer><RedArrow /></PointerLayer>
        <RectangularPattern />
        <InlineEditor>
          <Entry $w={132}><EntryText $ml={25} $hl>18.5 mm</EntryText></Entry>
          <Space $w={10} /><Caret $s={6} /><Space $w={26} />
          <Entry $w={104} $open><EntryText $ml={6}>4</EntryText></Entry>
          <Steps /><Grip $h={34} $g={2} />
        </InlineEditor>
        <ViewCube><CubeFace><Narrow>TOP</Narrow></CubeFace></ViewCube>
        <Palette><Rewind /><PaletteText>SKETCH PALETTE</PaletteText></Palette>
      </Workspace>

      <Timeline>
        <Ico s={26} h={30}><path d="M2 1 H6 V29 H2 Z M26 1 V29 L6 15 Z" fill="#4c4c50" /></Ico>
        <Space $w={24} />
        <Ico s={26} h={30}><path d="M20 2 V28 L0 15 Z M22 9 H26 V21 H22 Z" fill="#4c4c50" /></Ico>
        <Space $w={24} />
        <Ico s={26} h={30}><path d="M6 2 V28 L26 15 Z M0 9 H4 V21 H0 Z" fill="#4c4c50" /></Ico>
        <Space $w={26} />
        <Ico s={24} h={32}><path d="M0 0 V32 L24 16 Z" fill="#4c4c50" /></Ico>
        <Space $w={26} />
        <Ico s={24} h={30}><path d="M0 1 V29 L20 15 Z M20 1 H24 V29 H20 Z" fill="#4c4c50" /></Ico>
        <Space $w={42} />
        <Ico s={106} h={80}>
          <rect x={0} y={10} width={12} height={8} fill="#8d8df8" /><rect x={12} y={10} width={24} height={8} fill="#8fd2f6" />
          <rect x={48} y={10} width={40} height={8} fill="#8d8df8" />
          {[5, 17, 29].map(x => <rect key={x} x={x} y={37} width={6} height={12} fill="#b8d8f8" stroke="#1f3764" strokeWidth={2.4} />)}
          <path d="M26 76 H68 V66" stroke="#6a6a6a" strokeWidth={4} />
          <rect x={7} y={65} width={20} height={20} rx={3} fill="#c6ccd6" stroke="#8c929c" strokeWidth={2.4} />
          <path d="M11 75 H23 M17 69 V81" stroke="#000" strokeWidth={3.4} />
          <rect x={44} y={18} width={46} height={47} fill="#3d6a96" /><rect x={44} y={18} width={44} height={44} fill="#5386b8" />
          <rect x={48} y={22} width={40} height={40} fill="#e8e820" />
          <path d="M80 14 H104 V21 L94 32 V78 H90 V32 L80 21 Z" fill="#6a6a6a" />
          <g transform="translate(52 25)"><SketchGlyph s={33} /></g>
        </Ico>
        <Push />
        <Ico s={32}>
          <circle cx={16} cy={16} r={9.5} stroke="#636363" strokeWidth={5} />
          <circle cx={16} cy={16} r={4} fill="#636363" />
          {Array.from({ length: 8 }, (_, i) => <rect key={i} x={13.5} y={0} width={5} height={6} fill="#636363" transform={`rotate(${i * 45} 16 16)`} />)}
        </Ico>
      </Timeline>
    </Shell>
  );
}
